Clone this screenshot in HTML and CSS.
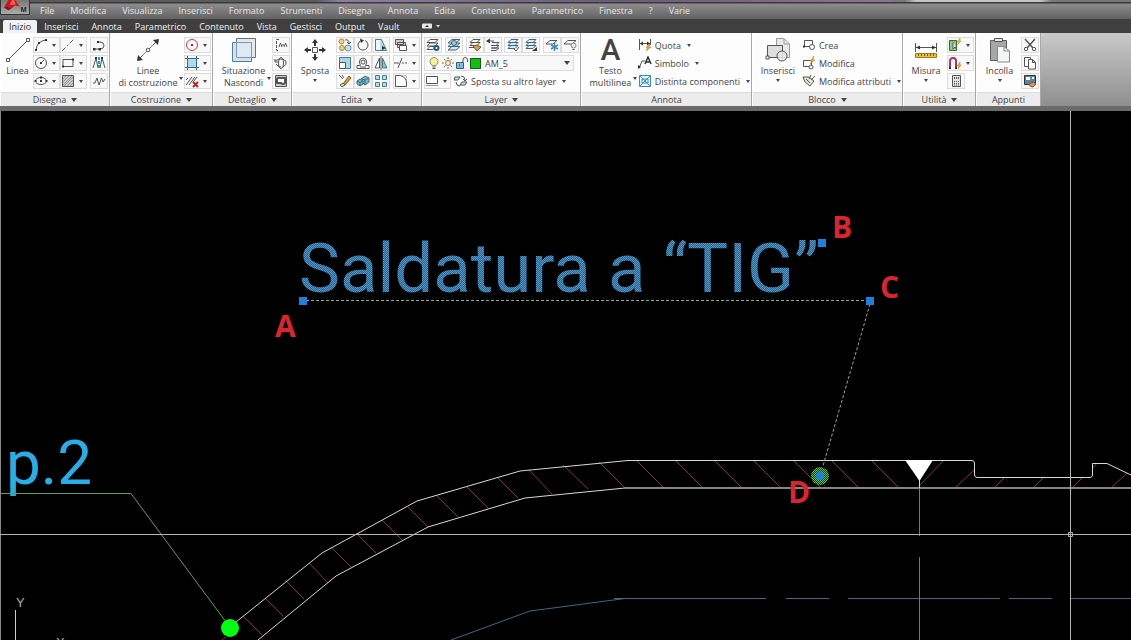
FILE: index.html
```html
<!DOCTYPE html>
<html lang="it">
<head>
    <meta charset="UTF-8">
    <meta name="viewport" content="width=device-width, initial-scale=1.0">
    <title>Disegno</title>
    <link rel="stylesheet" href="styles.css">
</head>
<body>
    <header class="topbar">
        <button class="logo" aria-label="Menu applicazione">
            <svg viewBox="0 0 30 15">
                <path d="M3 8 L8 0 H15 L20 7 L15 6 L11 9 L6 7 Z" fill="#c8141c"/>
                <path d="M3 8 L6 7 L11 9 L8 11 Z" fill="#8c0c12"/>
                <path d="M9 5 L12 0 H14 L16 5 Z" fill="#ee5a54"/>
                <text x="21" y="13" class="logo-letter">M</text>
            </svg>
        </button>
        <nav class="menu">
            <a href="#">File</a>
            <a href="#">Modifica</a>
            <a href="#">Visualizza</a>
            <a href="#">Inserisci</a>
            <a href="#">Formato</a>
            <a href="#">Strumenti</a>
            <a href="#">Disegna</a>
            <a href="#">Annota</a>
            <a href="#">Edita</a>
            <a href="#">Contenuto</a>
            <a href="#">Parametrico</a>
            <a href="#">Finestra</a>
            <a href="#">?</a>
            <a href="#">Varie</a>
        </nav>
    </header>

    <nav class="tabs">
        <a href="#" class="active">Inizio</a>
        <a href="#">Inserisci</a>
        <a href="#">Annota</a>
        <a href="#">Parametrico</a>
        <a href="#">Contenuto</a>
        <a href="#">Vista</a>
        <a href="#">Gestisci</a>
        <a href="#">Output</a>
        <a href="#">Vault</a>
        <button class="minimize" aria-label="Riduci barra">
            <svg viewBox="0 0 20 6"><rect width="10" height="5" y="0.5" rx="1" fill="#e8e8e8"/><path d="M3 4 L5 2 L7 4 Z" fill="#333"/><path d="M14 2 H18 L16 4.500 Z" fill="#ddd"/></svg>
        </button>
    </nav>

    <div class="ribbon">
        <section class="panel disegna">
            <div class="tools">
                <button class="big">
                    <svg viewBox="0 0 26 26"><path d="M4 22 L22 4" class="s"/><path d="M1.500 21.500h3v3h-3z M21.500 1.500h3v3h-3z" class="s w"/></svg>
                    <span>Linea</span>
                </button>
                <div class="col">
                    <button class="split" aria-label="Arco"><svg viewBox="0 0 14 14"><path d="M2 12 Q3 3 12 2" class="s"/><path d="M1 11h2v2H1z M4 4h2v2H4z M11 1h2v2h-2z" class="k"/></svg><i></i></button>
                    <button class="split" aria-label="Cerchio"><svg viewBox="0 0 14 14"><circle cx="7" cy="7" r="5.500" class="s"/><path d="M7 7 L10 4" class="s"/><path d="M6 6h2v2H6z" class="k"/></svg><i></i></button>
                    <button class="split" aria-label="Ellisse"><svg viewBox="0 0 14 14"><ellipse cx="7" cy="7" rx="5.500" ry="3.500" class="s"/><path d="M6 6h2v2H6z M6 2.500h2v2H6z M0.500 6h2v2h-2z M11.500 6h2v2h-2z" class="k"/></svg><i></i></button>
                </div>
                <div class="col">
                    <button class="split" aria-label="Linea d'asse"><svg viewBox="0 0 14 14"><path d="M1 13 L13 1" class="s" stroke-dasharray="5 2 2 2"/></svg><i></i></button>
                    <button class="split" aria-label="Rettangolo"><svg viewBox="0 0 14 14"><path d="M2 3.500h10v7H2z" class="s"/><path d="M1 9.500h2v2H1z M11 2.500h2v2h-2z" class="k"/></svg><i></i></button>
                    <button class="split" aria-label="Tratteggio"><svg viewBox="0 0 14 14"><path d="M1.500 1.500h11v11h-11z" class="s g"/><path d="M2 5 L5 2 M2 8 L8 2 M2 11 L11 2 M3 12 L12 3 M6 12 L12 6 M9 12 L12 9" stroke="#999" stroke-width="1"/></svg><i></i></button>
                </div>
                <div class="col gapped">
                    <button aria-label="Polilinea"><svg viewBox="0 0 14 14"><path d="M2 11 H8 Q12 11 12 7.500 Q12 4 8 4 H5" class="s"/><path d="M1 10h2.500v2.500H1z M6.500 10H9v2.500H6.500z M5 3h2v2H5z" class="k"/></svg></button>
                    <button aria-label="Spezzata"><svg viewBox="0 0 14 14"><path d="M1 12 L4 2 L6 12 M13 12 L10 2 L8 12" class="s"/><path d="M7 1 V13" stroke="#2aa0b8" stroke-width="2" stroke-dasharray="3 1"/><path d="M3 1h2v2H3z M9 1h2v2H9z" class="k"/></svg></button>
                    <button aria-label="Zigzag"><svg viewBox="0 0 14 14"><path d="M1 9 H3 L5 4 L7 11 L9.500 4 L11 8 L13 5" class="s"/></svg></button>
                </div>
            </div>
            <h2>Disegna <i></i></h2>
        </section>

        <section class="panel costruzione">
            <div class="tools">
                <button class="big">
                    <svg viewBox="0 0 26 26"><path d="M4 22 L22 4" class="s"/><path d="M8 18 L18 8" stroke="#c66"/><path d="M2 24 L3 18 L8 23 Z M24 2 L18 3 L23 8 Z" class="k"/><circle cx="13" cy="13" r="1.800" class="s w"/></svg>
                    <span>Linee<br>di costruzione</span>
                    <i class="corner"></i>
                </button>
                <div class="col">
                    <button class="split" aria-label="Cerchio di costruzione"><svg viewBox="0 0 14 14"><circle cx="7" cy="7" r="5.500" fill="none" stroke="#c0404a"/><path d="M6 6h2v2H6z" fill="#a02030"/></svg><i></i></button>
                    <button class="split" aria-label="Griglia"><svg viewBox="0 0 14 14"><path d="M2.500 2.500h9v9h-9z" fill="#a9dcee" stroke="#2f7f9c"/><path d="M0 2.500H14 M0 11.500H14 M2.500 0V14 M11.500 0V14" stroke="#2f6076" stroke-dasharray="2 1"/></svg><i></i></button>
                    <button class="split" aria-label="Elimina linee"><svg viewBox="0 0 14 14"><path d="M1 11 L7 3 M4 11 L10 3 M1 6 L3 4 M8 8 L12 3" class="s"/><path d="M8 8 L13 13 M13 8 L8 13" stroke="#c8202a" stroke-width="2"/></svg><i></i></button>
                </div>
            </div>
            <h2>Costruzione <i></i></h2>
        </section>

        <section class="panel dettaglio">
            <div class="tools">
                <button class="big">
                    <svg viewBox="0 0 26 26"><path d="M5.500 1.500h19v19h-19z" fill="#e4e8ea" stroke="#66727a"/><path d="M1.500 5.500h19v19h-19z" fill="#d2e3ee" stroke="#4a7f9c"/><path d="M5.500 5.500h15v15h-15z" fill="#dfe9f4" stroke="#8098ac"/></svg>
                    <span>Situazione<br>Nascondi</span>
                    <i class="corner"></i>
                </button>
                <div class="col">
                    <button aria-label="Vista in sezione"><svg viewBox="0 0 14 14"><path d="M5 1.500H2.500v11H5" class="s" stroke-dasharray="3 1"/><path d="M5 9 L6.500 5 L8 9 M10 9 L11.500 5 L13 9 M8 7h2" class="s"/></svg></button>
                    <button aria-label="Ruota vista"><svg viewBox="0 0 14 14"><ellipse cx="7" cy="7" rx="2.500" ry="5.500" class="s"/><path d="M1 5 Q7 1 12 5 Q13 9 9 11 M1 3v3h3 M4 9 Q5 11 7 11 M2 8 Q3 10 5 10" class="s"/></svg></button>
                    <button aria-label="Cornice"><svg viewBox="0 0 14 14"><path d="M1.500 1.500h11v11h-11z" class="s g"/><path d="M3 5 Q4 3 6 4 H11 V9 Q9 11 7 9 H3 Z" class="s w" stroke-width="2"/></svg></button>
                </div>
            </div>
            <h2>Dettaglio <i></i></h2>
        </section>

        <section class="panel edita">
            <div class="tools">
                <button class="big">
                    <svg viewBox="0 0 26 26"><path d="M13 3V9 M13 17V23 M3 13H9 M17 13H23" stroke="#333" stroke-width="2"/><path d="M10 6 L13 2 L16 6 Z M10 20 L13 24 L16 20 Z M6 10 L2 13 L6 16 Z M20 10 L24 13 L20 16 Z" class="k"/><path d="M10.500 10.500h5v5h-5z" class="s w"/></svg>
                    <span>Sposta</span>
                    <i></i>
                </button>
                <div class="grid">
                    <button aria-label="Copia"><svg viewBox="0 0 14 14"><circle cx="3.500" cy="3.500" r="2.500" fill="#f3d27a" stroke="#a98932"/><circle cx="4" cy="10" r="2.500" fill="#f3d27a" stroke="#a98932"/><circle cx="10" cy="10" r="3" fill="#c3e2ee" stroke="#5f97ad"/><path d="M7 2 Q11 1 11 5 M9 4 L11 6 L13 4" class="s"/></svg></button>
                    <button aria-label="Ruota"><svg viewBox="0 0 14 14"><path d="M5 2.500 A5 5 0 1 0 9 2.500" class="s"/><path d="M4 0.500 L8 2.500 L5 5 Z" class="k"/></svg></button>
                    <button aria-label="Stira"><svg viewBox="0 0 14 14"><path d="M1.500 12.500V1.500H7.500L12.500 12.500Z" fill="#b8dfe9" stroke="#467c8d"/><path d="M2 2h4v10H2Z" fill="#eef6f8"/><path d="M8 8 L12 10 L8 12Z" class="k"/></svg></button>
                    <button aria-label="Scala"><svg viewBox="0 0 14 14"><path d="M1.500 1.500h11v11h-11z" fill="#a9d8e5" stroke="#467c8d"/><path d="M1.500 6.500h6v6h-6z" class="s w"/></svg></button>
                    <button aria-label="Offset"><svg viewBox="0 0 14 14"><path d="M1 12.500H13V9.500H9.500Q12 6 9.500 3 Q7 1 4.500 3 Q2 6 4.500 9.500H1Z" class="s w"/><path d="M4 11H10 M5 5 Q7 3 9 5 Q9 7 8 8 H6 Q5 7 5 5" class="s"/></svg></button>
                    <button aria-label="Specchio"><svg viewBox="0 0 14 14"><path d="M5.500 2V12H1Z" class="s w"/><path d="M8.500 2V12H13Z" fill="#86c4d4" stroke="#467c8d"/><path d="M7 0V14" class="s"/></svg></button>
                    <button aria-label="Cancella"><svg viewBox="0 0 14 14"><path d="M5 10 L11 2 L13 4 L7 11 Z" fill="#d8a13c" stroke="#80551b"/><path d="M2 11 L5 9 L7 11 L4 13 Z" fill="#e6d8a8" stroke="#555"/><path d="M1 1 L5 5 M4 1 L6 4" class="s"/></svg></button>
                    <button aria-label="Estrudi"><svg viewBox="0 0 14 14"><path d="M1 7 L4 5 L7 7 V10 L4 12 L1 10Z M5 5 L9 2 L13 4 V8 L9 11 L7 9" fill="#78bccd" stroke="#356b7c"/><path d="M1 7 L4 8.500 L7 7 M4 8.500V12 M9 6 L13 4 M9 6V11 M9 6 L6 5" stroke="#356b7c" fill="none"/></svg></button>
                    <button aria-label="Serie"><svg viewBox="0 0 14 14"><path d="M1.500 1.500h4v4h-4z M8.500 1.500h4v4h-4z M1.500 8.500h4v4h-4z M8.500 8.500h4v4h-4z" fill="#b6dfe9" stroke="#467c8d"/></svg></button>
                </div>
                <div class="col gapped">
                    <button class="split" aria-label="Ordine"><svg viewBox="0 0 14 14"><path d="M1.500 1.500h8v5h-8z M3.500 4.500h8v5h-8z" class="s g"/><path d="M5.500 7.500h7v5h-7z" class="s w"/></svg><i></i></button>
                    <button class="split" aria-label="Taglia"><svg viewBox="0 0 14 14"><path d="M0 7H5 M8 7h2 M11 7h2 M4 12 L8 2" class="s"/></svg><i></i></button>
                    <button class="split" aria-label="Raccorda"><svg viewBox="0 0 14 14"><path d="M1.500 1.500H6 Q12.500 3 12.500 9 V12.500H1.500Z" class="s w"/><path d="M7 1.500h5.500V6" stroke="#aaa" fill="none" stroke-dasharray="2 1"/></svg><i></i></button>
                </div>
            </div>
            <h2>Edita <i></i></h2>
        </section>

        <section class="panel layer">
            <div class="tools stack">
                <div class="row spread">
                    <div class="row"><button aria-label="Proprietà layer"><svg viewBox="0 0 14 14"><path d="M4 1.500h8L9 4.500H1Z M4 5h8L9 8H1Z M4 8.500h5L7 11.500H1Z" class="s w"/><circle cx="10.500" cy="10" r="2" fill="#fff" stroke="#1e5b8a" stroke-width="2"/></svg></button></div>
                    <div class="row"><button aria-label="Stati layer"><svg viewBox="0 0 14 14"><path d="M5 1.500h8L9 5H1Z M5 5h8L9 8.500H1Z M5 8.500h8L9 12H1Z" fill="#d4e7f1" stroke="#41667c"/><circle cx="7" cy="5" r="2.500" fill="#9cc8de" stroke="#41667c"/></svg></button></div>
                    <div class="row">
                        <button aria-label="Rendi corrente"><svg viewBox="0 0 14 14"><path d="M5 1.500h7L9 4.500H2Z M5 4.500h7L9 7.500H2Z M1 9.500h6" class="s w"/><path d="M5 8 L9 7 L13 9 L9 13 Z" fill="#d9a05a" stroke="#8a5420"/></svg></button>
                        <button aria-label="Layer precedente"><svg viewBox="0 0 14 14"><path d="M6 4.500h7L10 7.500H5 M6 7.500h7L10 10H5 M6 10h7L10 12.500H5" class="s"/><path d="M0 3 L4 0.500 V5.500Z" class="k"/><path d="M3 3h5" class="s"/></svg></button>
                    </div>
                    <div class="row">
                        <button aria-label="Isola"><svg viewBox="0 0 14 14"><path d="M5 1.500h7L9 4.500H2Z M5 4.500h7L9 7.500H2Z M5 7.500h7L9 10.500H2Z" fill="#dcecf3" stroke="#41667c"/><path d="M8 11 L10 13 L13 9" class="s"/></svg></button>
                        <button aria-label="Annulla isola"><svg viewBox="0 0 14 14"><path d="M5 1.500h7L9 4.500H2Z M5 4.500h7L9 7.500H2Z M5 7.500h7L9 10.500H2Z" fill="#dcecf3" stroke="#41667c"/><path d="M8 13 L13 9 V13Z" class="k"/></svg></button>
                    </div>
                    <div class="row">
                        <button aria-label="Congela"><svg viewBox="0 0 14 14"><path d="M5 2.500h7L8 6H1Z" class="s w"/><path d="M9.500 5V13 M6 7 L13 11 M13 7 L6 11" stroke="#3a8fb0" stroke-width="1.500"/></svg></button>
                        <button aria-label="Disattiva"><svg viewBox="0 0 14 14"><path d="M5 2.500h8L9 6H1Z" class="s w"/><circle cx="10.500" cy="7.500" r="2.500" fill="#e4e9ec" stroke="#7a8a94"/><path d="M9.500 11.500h2" class="s"/></svg></button>
                    </div>
                </div>
                <div class="combo">
                    <svg viewBox="0 0 12 14"><path d="M4 9.500 Q1.500 7 2 4.500 Q3 1.500 6 1.500 Q9 1.500 10 4.500 Q10.500 7 8 9.500Z" fill="#f8f0a0" stroke="#999255"/><path d="M4.500 11h3 M4.500 12.500h3" stroke="#555"/></svg>
                    <svg viewBox="0 0 12 14"><circle cx="6" cy="7" r="2.500" fill="#f9edb0" stroke="#8b8150"/><path d="M6 1V3 M6 11V13 M0 7H2 M10 7H12 M2 3 L3.500 4.500 M10 3 L8.500 4.500 M2 11 L3.500 9.500 M10 11 L8.500 9.500" stroke="#77704f"/></svg>
                    <svg viewBox="0 0 12 14"><path d="M0.500 6.500h7v6h-7z" fill="#7fbcd9" stroke="#2e617c"/><path d="M7 6V4 Q7 1.500 9 1.500 Q11.500 1.500 11.500 4V6" class="s"/><path d="M3.500 8.500v2" class="s"/></svg>
                    <span class="swatch"></span>
                    <label class="hidden" for="layer">Layer corrente</label>
                    <select id="layer"><option>AM_5</option></select>
                    <i></i>
                </div>
                <div class="row third">
                    <button class="split" aria-label="Stile layer"><svg viewBox="0 0 14 14"><path d="M1.500 2.500h11v7h-11z" class="s w"/><path d="M1 11.500h12" stroke="#999"/></svg><i></i></button>
                    <button class="text"><svg viewBox="0 0 14 14"><path d="M1 3h5L4 6H0Z M8 8h5L11 11H6Z" fill="#d5ebda" stroke="#3e5b50"/><path d="M7 2 Q11 2 11 6 M9 5 L11 7 L13 5 M2 8 Q2 12 6 12" class="s"/></svg>Sposta su altro layer<i></i></button>
                </div>
            </div>
            <h2>Layer <i></i></h2>
        </section>

        <section class="panel annota">
            <div class="tools">
                <button class="big">
                    <b class="glyph">A</b>
                    <span>Testo<br>multilinea</span>
                    <i class="corner"></i>
                </button>
                <div class="col list">
                    <button class="text"><svg viewBox="0 0 14 14"><path d="M1.500 1V12 M12.500 1V7 M2 5.500H12" class="s"/><path d="M2 5.500 L5 3.500V7.500Z M12 5.500 L9 3.500V7.500Z" class="k"/><path d="M11 6 L8 10H10L8 13 L13 9H11L12 6Z" fill="#f0a63a" stroke="#b06c18" stroke-width="0.500"/></svg>Quota<i></i></button>
                    <button class="text"><svg viewBox="0 0 14 14"><path d="M1 12 L4 5H7" class="s"/><path d="M0 13 V9 L3 11Z" class="k"/><path d="M7 8 L10 1 L13 8 M8 6h4" stroke="#333" stroke-width="1.500" fill="none"/></svg>Simbolo<i></i></button>
                    <button class="text"><svg viewBox="0 0 14 14"><path d="M1.500 1.500h11v11h-11z" fill="#e3f3fa" stroke="#3c8fb4"/><path d="M2 2 L12 12 M12 2 L2 12 M4 5h6v4H4Z" stroke="#3c8fb4" fill="none"/></svg>Distinta componenti<i></i></button>
                </div>
            </div>
            <h2>Annota</h2>
        </section>

        <section class="panel blocco">
            <div class="tools">
                <button class="big">
                    <svg viewBox="0 0 26 26"><path d="M11.500 1.500H19L24.500 7V20.500H11.500Z" fill="#e9e9e9" stroke="#999"/><path d="M19 1.500V7H24.500" fill="none" stroke="#999"/><path d="M2.500 8.500h15v12h-15z" fill="#dedede" stroke="#555"/><circle cx="17" cy="19" r="5" fill="#e9e9e9" fill-opacity=".8" stroke="#555"/><path d="M1 19h3v3H1z" class="s w"/></svg>
                    <span>Inserisci</span>
                    <i></i>
                </button>
                <div class="col list">
                    <button class="text"><svg viewBox="0 0 14 14"><path d="M2.500 2.500h8v6h-8z" class="s w"/><circle cx="10" cy="9" r="2.500" class="s w"/><path d="M1 7.500h2v2H1z" class="k"/></svg>Crea</button>
                    <button class="text"><svg viewBox="0 0 14 14"><path d="M1.500 4.500h8v6h-8z" class="s w"/><circle cx="9" cy="11" r="2" class="s w"/><path d="M12 0 L8 5H10L8 8 L13 4H11Z" fill="#f0b03a" stroke="#b0781a" stroke-width="0.500"/></svg>Modifica</button>
                    <button class="text"><svg viewBox="0 0 14 14"><path d="M1 3h6L12 7 L8 12 L3 8Z" fill="#dfe7cf" stroke="#555c45"/><path d="M4 5 L8 9 M9 1 L7 5 M13 2 L9 6" class="s"/></svg>Modifica attributi<i></i></button>
                </div>
            </div>
            <h2>Blocco <i></i></h2>
        </section>

        <section class="panel utilita">
            <div class="tools">
                <button class="big">
                    <svg viewBox="0 0 26 26"><path d="M2.500 6V15 M23.500 6V15 M3 10.500H23" class="s"/><path d="M3 10.500 L7 8.500V12.500Z M23 10.500 L19 8.500V12.500Z" class="k"/><path d="M2.500 16.500h21v4h-21z" fill="#ecc03d" stroke="#a87c15"/><path d="M5.500 17v2 M8.500 17v2 M11.500 17v2 M14.500 17v2 M17.500 17v2 M20.500 17v2" stroke="#7a5a10"/></svg>
                    <span>Misura</span>
                    <i></i>
                </button>
                <div class="col">
                    <button class="split" aria-label="Selezione rapida"><svg viewBox="0 0 14 14"><path d="M1.500 2.500h7v10h-7z" fill="#8fc98a" stroke="#356b35"/><path d="M5 4 V11 L7 9 L9 12" class="s w"/><path d="M12 0 L9 4H11L9 7 L13 3H12Z" fill="#f0c13a" stroke="#b0881a" stroke-width="0.500"/></svg><i></i></button>
                    <button class="split" aria-label="Snap"><svg viewBox="0 0 14 14"><path d="M2 11V5 Q2 2 5 2 Q8 2 8 5V11" fill="none" stroke="#a23a62" stroke-width="2"/><path d="M1 11h2v2H1z M7 11h2v2H7z" class="k"/><path d="M12 6 L9 10H11L10 13 L13 9H12Z" fill="#f0b03a" stroke="#b0781a" stroke-width="0.500"/></svg><i></i></button>
                    <button aria-label="Calcolatrice"><svg viewBox="0 0 14 14"><path d="M3.500 1.500h8v11h-8z" fill="#e4e4e4" stroke="#555"/><path d="M5 3.500h5v1H5z M5 7.500h5 M5 9.500h5 M5 11h5" stroke="#555" fill="none" stroke-dasharray="1 1"/></svg></button>
                </div>
            </div>
            <h2>Utilità <i></i></h2>
        </section>

        <section class="panel appunti">
            <div class="tools">
                <button class="big">
                    <svg viewBox="0 0 26 26"><path d="M3.500 3.500h16v20h-16z" fill="#a5a8a4" stroke="#5b5d59"/><path d="M7.500 1.500h8v3h-8z" fill="#e8e8e8" stroke="#555"/><path d="M10.500 9.500H17L22.500 14V25H10.500Z" fill="#f4f5f8" stroke="#888"/><path d="M17 9.500V14H22.500" fill="none" stroke="#888"/></svg>
                    <span>Incolla</span>
                    <i></i>
                </button>
                <div class="col">
                    <button aria-label="Taglia negli appunti"><svg viewBox="0 0 14 14"><path d="M2 1 L10 10 M12 1 L4 10" stroke="#555" stroke-width="1.500"/><circle cx="3" cy="11" r="1.700" class="s w"/><circle cx="11" cy="11" r="1.700" class="s w"/></svg></button>
                    <button aria-label="Copia negli appunti"><svg viewBox="0 0 14 14"><path d="M1.500 1.500h6v9h-6z" class="s w"/><path d="M5.500 3.500H9.500L12.500 6.500V13H5.500Z M9.500 3.500V6.500H12.500" class="s w"/></svg></button>
                    <button aria-label="Copia proprietà"><svg viewBox="0 0 14 14"><path d="M1.500 1.500h11v9h-11z" fill="#5c86a8" stroke="#333"/><path d="M3 3h4v3H3z M9 3h2v2H9z" fill="#fff"/><path d="M6 10 L10 8 L13 10 L10 13 L7 12Z" fill="#e0954a" stroke="#8a5420"/></svg></button>
                </div>
            </div>
            <h2>Appunti</h2>
        </section>
    </div>

    <main class="canvas">
        <svg class="drawing" viewBox="0 111 1131 529" preserveAspectRatio="xMinYMin slice">
            <defs>
                <pattern id="selected" width="2" height="2" patternUnits="userSpaceOnUse">
                    <rect width="2" height="2" fill="#29618c"/>
                    <rect width="1" height="1" fill="#4f9acb"/>
                    <rect x="1" y="1" width="1" height="1" fill="#4f9acb"/>
                </pattern>
                <pattern id="selected-dot" width="2" height="2" patternUnits="userSpaceOnUse">
                    <rect width="2" height="2" fill="#0a3a10"/>
                    <rect width="1" height="1" fill="#5cc05c"/>
                    <rect x="1" y="1" width="1" height="1" fill="#5cc05c"/>
                </pattern>
            </defs>

            <!-- hatching of the section -->
            <path class="hatch" d="M222 640L226 637 M243 616L262 635 M265 598L283 616 M285 580L304 599 M309 563L328 583 M331 547L351 567 M356 533L376 553 M382 520L402 540 M408 507L428 527 M436 495L458 517 M466 486L488 508 M497 477L518 498 M529 470L552 494 M563 465L588 489 M599 462L625 488 M636 460L664 488 M675 460L703 488 M714 460L742 488 M753 460L781 488 M793 460L821 488 M831 460L859 488 M871 460L899 488 M944 460L919 486 M974 470L955 488 M1005 477L994 488 M1044 477L1033 488 M1083 477L1072 488 M1097 463L1093 468 M1127 473L1111 488"/>

            <!-- section outline -->
            <path class="outline" d="M236 622 L322 553 L417 501 L520 471 L628 460.500 H972 Q974.500 461 974.500 463 V475 Q975 477.500 977 477.500 H1090 Q1092.500 477 1092.500 475 V463.500 H1107 L1131 475"/>
            <path class="outline" d="M258 640 L336 576 L428 527 L525 498 L625 488"/>
            <path class="inner" d="M625 488H1131"/>

            <!-- axes -->
            <path class="blue" d="M451 640 L530 611 L625 598.500 M614 598.500H766 M786 598.500H829 M848 598.500H1000 M1009 598.500H1052 M1071 598.500H1131"/>
            <path class="magenta" d="M919.500 488V536 M919.500 557V640"/>
            <path class="outline" d="M919.500 480V488"/>
            <path class="weld" d="M905 460H933L919.500 481Z"/>

            <!-- item leader -->
            <text x="6" y="484" class="item">p.2</text>
            <path class="leader" d="M1 493.500H131 L226 622"/>
            <circle cx="230" cy="628" r="9" fill="#00ff10"/>

            <!-- selected note -->
            <text x="299" y="292" class="note">Saldatura a “TIG”</text>
            <path class="dotted" d="M306 300.500H866 M870 304L823 466"/>
            <circle cx="820" cy="476" r="9" fill="url(#selected-dot)"/>
            <circle cx="820" cy="476" r="4" fill="#1f7fdc"/>
            <path class="grip" d="M299 297h8v8h-8z M818 239h8v8h-8z M866 297h8v8h-8z"/>

            <!-- crosshair -->
            <path class="cursor" d="M0 534.500H1131 M1070.500 111V640"/>
            <path class="cursor" d="M1068.500 532.500h4v4h-4z"/>

            <text x="275" y="337" class="mark">A</text>
            <text x="832" y="238" class="mark">B</text>
            <text x="880" y="298" class="mark">C</text>
            <text x="788" y="503" class="mark">D</text>

            <!-- ucs icon -->
            <text x="16" y="607" class="ucs">Y</text>
            <text x="56" y="647" class="ucs">X</text>
            <path d="M15.500 610V640" stroke="#ccc"/>
        </svg>
    </main>
</body>
</html>
```
FILE: styles.css
```css
* {
    box-sizing: border-box;
}

body {
    margin: 0;
    height: 100vh;
    display: flex;
    flex-direction: column;
    overflow: hidden;
    background-color: #000;
    font-family: 'Open Sans', sans-serif;
    font-size: 9px;
    color: #444;
}

button {
    margin: 0;
    padding: 0;
    border: none;
    background: none;
    font: inherit;
    color: inherit;
    cursor: pointer;
}

a {
    color: inherit;
    text-decoration: none;
}

/* small drop-down arrow */
i {
    width: 0;
    height: 0;
    flex: none;
    border: 2px solid transparent;
    border-top: 3px solid #444;
    border-bottom: none;
}

.topbar {
    display: grid;
    grid-template-columns: 30px 1fr;
    grid-template-rows: 3px 16px;
    flex: none;
    background: linear-gradient(transparent 2px, #3a3a3a 2px, #3a3a3a 3px, #8c8c8c 4px, #636363 19px),
        linear-gradient(to right, #5a5a5a 28%, #8f7da6 30%, #6a5a78 55%, #8a7496 78%, #777 80%, #c4c4c4 81%, #c4c4c4 92%, #777 93%);
}

.logo {
    grid-row: 1 / 3;
    height: 15px;
    border: 1px solid #333;
    border-top: none;
    background: linear-gradient(#777, #aaa);
}

.logo svg {
    display: block;
    width: 28px;
    height: 14px;
}

.logo-letter {
    font-size: 7px;
    font-weight: bold;
    fill: #222;
}

.menu {
    grid-column: 2;
    grid-row: 2;
    display: flex;
    align-items: center;
    gap: 16px;
    padding-left: 10px;
    padding-bottom: 2px;
    color: #e6e6e6;
}

.tabs {
    display: flex;
    align-items: flex-end;
    gap: 1px;
    flex: none;
    height: 14px;
    padding-left: 3px;
    background-color: #3f3f3f;
    color: #f0f0f0;
}

.tabs a {
    height: 13px;
    line-height: 13px;
    padding: 0 6px;
}

.tabs .active {
    background-color: #f2f2f2;
    color: #333;
    border-radius: 2px 2px 0 0;
}

.minimize {
    align-self: center;
    margin-left: 16px;
}

.minimize svg {
    display: block;
    width: 20px;
    height: 6px;
}

.ribbon {
    display: flex;
    flex: none;
    height: 78px;
    border-bottom: 5px solid #6b6b6b;
    background: linear-gradient(#c9c9c9, #8f8f8f);
}

.panel {
    display: flex;
    flex-direction: column;
    flex: none;
    border-right: 1px solid #a8a8a8;
    border-left: 1px solid #fff;
    background-color: #fdfdfd;
}

.panel h2 {
    display: flex;
    justify-content: center;
    align-items: center;
    gap: 5px;
    height: 14px;
    margin: 0;
    font-size: 9px;
    font-weight: normal;
    background-color: #ececec;
    border-top: 1px solid #ddd;
}

.panel h2 i {
    border-width: 4px 3px 0;
}

.tools {
    display: flex;
    flex: 1;
    justify-content: flex-end;
    padding: 4px 1px 0;
}

.disegna { width: 110px; }
.costruzione { width: 103px; }
.dettaglio { width: 79px; }
.edita { width: 130px; }
.layer { width: 159px; }
.annota { width: 171px; }
.blocco { width: 151px; }
.utilita { width: 73px; }
.appunti { width: 65px; }

.s { fill: none; stroke: #555; }
.w { fill: #fff; }
.g { fill: #ccc; }
.k { fill: #333; }

.big {
    position: relative;
    display: flex;
    flex: 1;
    flex-direction: column;
    align-items: center;
    align-self: flex-start;
    gap: 2px;
    line-height: 12px;
}

.big svg {
    width: 26px;
    height: 26px;
}

.glyph {
    height: 26px;
    font: 500 30px/26px Roboto, sans-serif;
}

.big .corner {
    position: absolute;
    right: 1px;
    bottom: 9px;
}

.col {
    display: flex;
    flex-direction: column;
    gap: 2px;
}

.col.gapped {
    margin-left: 3px;
}

.grid {
    display: grid;
    grid-template-columns: repeat(3, 18px);
    grid-auto-rows: 16px;
    gap: 2px 0;
}

.col button,
.grid button,
.row button {
    display: flex;
    align-items: center;
    justify-content: center;
    width: 18px;
    height: 16px;
    border: 1px solid #dcdcdc;
    background-color: #f8f8f8;
}

.col svg,
.grid svg,
.row svg {
    width: 14px;
    height: 14px;
}

.col .split,
.row .split {
    width: 27px;
    justify-content: space-between;
    padding-right: 3px;
}

.col .text,
.row .text {
    width: auto;
    justify-content: flex-start;
    gap: 3px;
    border: none;
    background: none;
    white-space: nowrap;
}

.text i {
    margin-left: 3px;
}

.stack {
    flex-direction: column;
    justify-content: flex-start;
    gap: 2px;
}

.row {
    display: flex;
}

.spread {
    justify-content: space-between;
}

.third {
    gap: 3px;
}

.combo {
    display: flex;
    align-items: center;
    gap: 2px;
    height: 16px;
    margin-right: 5px;
    padding: 0 3px;
    border: 1px solid #dcdcdc;
    background-color: #f8f8f8;
}

.combo i {
    border-width: 4px 3px 0;
}

.combo svg {
    width: 12px;
    height: 14px;
}

.combo select {
    flex: 1;
    appearance: none;
    border: none;
    padding: 0 2px;
    background: none;
    font: inherit;
    color: inherit;
}

.swatch {
    width: 11px;
    height: 11px;
    border: 1px solid #1a5a1a;
    background-color: #0fc00f;
}

.hidden {
    display: none;
}

.canvas {
    flex: 1;
    min-height: 0;
    overflow: hidden;
    box-shadow: inset 1px 0 #888;
}

.drawing {
    display: block;
    width: 100%;
    height: 100%;
}

.drawing path {
    fill: none;
}

.hatch { stroke: #8e2c3c; }
.outline { stroke: #d8d8d8; }
.inner { stroke: #858585; stroke-width: 2; }
.blue { stroke: #3d6a85; }
.magenta { stroke: #b04cb8; }
.leader { stroke: #58a058; }
.dotted { stroke: #8fae8f; stroke-dasharray: 3 2; }
.cursor { stroke: #b4b4b4; }
.drawing .grip { fill: #1f7fdc; }
.drawing .weld { fill: #fff; }

.item {
    font-family: Roboto, sans-serif;
    font-size: 62px;
    fill: #27aee6;
}

.note {
    font-family: Roboto, sans-serif;
    font-size: 69px;
    fill: url(#selected);
}

.mark {
    font-size: 30px;
    font-weight: bold;
    fill: #d9252e;
}

.ucs {
    font-family: 'Liberation Sans', sans-serif;
    font-size: 13px;
    fill: #b0b0b0;
}
```
